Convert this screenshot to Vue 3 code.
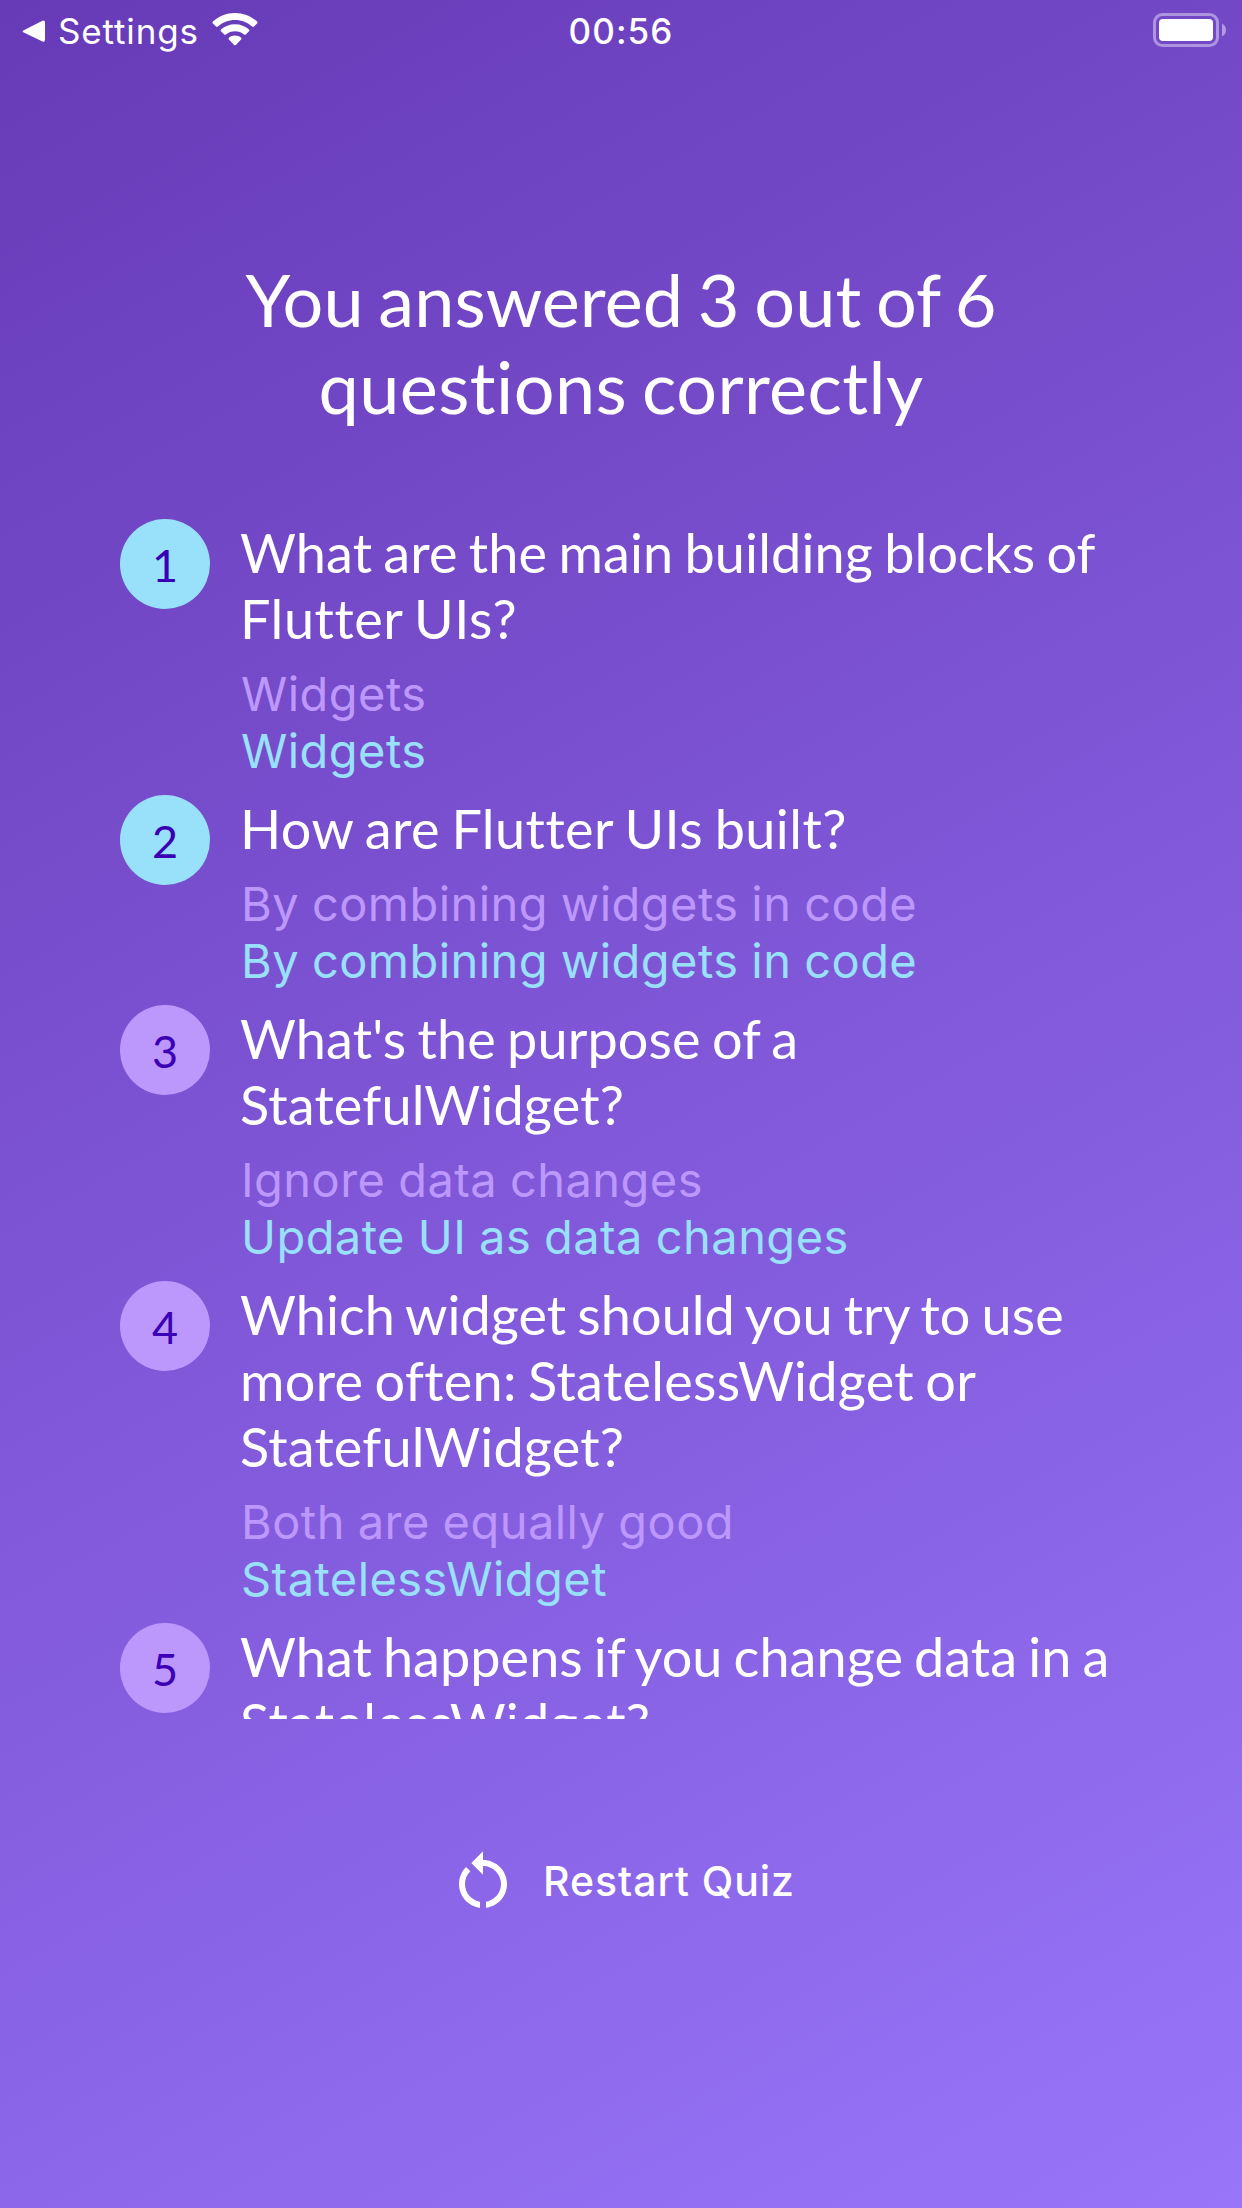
<script setup>
// ls: letter spacing of each question line, in px
const items = [
  {
    ok: true,
    lines: [{ text: 'What are the main building blocks of', ls: 0.14 }, { text: 'Flutter UIs?', ls: 0.55 }],
    given: 'Widgets',
    right: 'Widgets',
  },
  {
    ok: true,
    lines: [{ text: 'How are Flutter UIs built?', ls: 0.44 }],
    given: 'By combining widgets in code',
    right: 'By combining widgets in code',
  },
  {
    ok: false,
    lines: [{ text: "What's the purpose of a", ls: 0.13 }, { text: 'StatefulWidget?', ls: 0.18 }],
    given: 'Ignore data changes',
    right: 'Update UI as data changes',
  },
  {
    ok: false,
    lines: [
      { text: 'Which widget should you try to use', ls: 0.06 },
      { text: 'more often: StatelessWidget or', ls: 0.3 },
      { text: 'StatefulWidget?', ls: 0.18 },
    ],
    given: 'Both are equally good',
    right: 'StatelessWidget',
  },
  {
    ok: false,
    lines: [{ text: 'What happens if you change data in a', ls: 0.05 }, { text: 'StatelessWidget?', ls: 0.3 }],
  },
]
</script>

<template>
  <div class="screen">
    <header class="status">
      <div class="back">
        <svg class="tri" width="24" height="24" viewBox="0 0 24 24" fill="#fff">
          <path d="M1.800 10.200 20.500 .8Q23 0 23 2.500V19.500Q23 22.500 20.500 21.500L1.800 12.600Q-.5 11.400 1.800 10.200Z" />
        </svg>
        <span class="settings">Settings</span>
        <svg class="wifi" width="46" height="34" viewBox="0 0 46 34" fill="#fff">
          <path d="M23 0C14.500 0 6.700 3.200.9 8.600Q0 9.500.9 10.400L4 13.600Q4.900 14.400 5.800 13.600C10.300 9.500 16.300 7 23 7S35.700 9.500 40.200 13.600Q41.100 14.400 42 13.600L45.100 10.400Q46 9.500 45.100 8.600C39.300 3.200 31.500 0 23 0Z" />
          <path d="M23 11.200C17.600 11.200 12.700 13.200 9 16.500Q8.100 17.400 9 18.300L12.200 21.500Q13 22.200 13.900 21.500C16.300 19.400 19.500 18.200 23 18.200S29.700 19.400 32.100 21.500Q33 22.200 33.800 21.500L37 18.300Q37.900 17.400 37 16.500C33.300 13.200 28.400 11.200 23 11.200Z" />
          <path d="M23 22.500C20.700 22.500 18.500 23.400 16.900 24.800Q16 25.700 16.900 26.600L22.100 31.900Q23 32.800 23.900 31.900L29.100 26.600Q30 25.700 29.100 24.800C27.500 23.400 25.300 22.500 23 22.500Z" />
        </svg>
      </div>
      <time class="clock">00:56</time>
      <svg class="battery" width="74" height="35" viewBox="0 0 74 35">
        <rect x="1.500" y="1.500" width="63" height="31" rx="8" fill="none" stroke="#fff" stroke-opacity=".42" stroke-width="3" />
        <rect x="6" y="6" width="54" height="22" rx="4" fill="#fff" />
        <path d="M69 10.500Q73 12.500 73 17T69 23.500Z" fill="#fff" fill-opacity=".45" />
      </svg>
    </header>

    <main class="results">
      <h1 class="title">
        <span class="line">You answered 3 out of 6</span>
        <span class="line second">questions correctly</span>
      </h1>
      <div class="list">
        <article v-for="(item, i) in items" :key="i" class="item">
          <div class="badge" :class="{ ok: item.ok }">{{ i + 1 }}</div>
          <div class="body">
            <h2 class="question">
              <span v-for="l in item.lines" :key="l.text" class="line" :style="{ letterSpacing: l.ls + 'px' }">{{ l.text }}</span>
            </h2>
            <template v-if="item.given">
              <p class="answer given">{{ item.given }}</p>
              <p class="answer right">{{ item.right }}</p>
            </template>
          </div>
        </article>
      </div>
      <button class="restart">
        <svg width="72" height="72" viewBox="0 0 24 24" fill="#fff">
          <path d="M6 13c0-1.650.67-3.150 1.760-4.240L6.340 7.340C4.900 8.790 4 10.790 4 13c0 4.080 3.050 7.440 7 7.930v-2.020C8.170 18.430 6 15.970 6 13z" />
          <path d="M20 13c0-4.420-3.580-8-8-8V2.100L8.100 6 12 9.900V7c3.310 0 6 2.690 6 6 0 2.970-2.170 5.430-5 5.910v2.020c3.950-.49 7-3.850 7-7.930z" />
        </svg>
        <span>Restart Quiz</span>
      </button>
    </main>
  </div>
</template>

<style>
body { margin: 0; }
</style>

<style scoped>
.screen {
  width: 1242px;
  height: 2208px;
  overflow: hidden;
  color: #fff;
  background: linear-gradient(150.64deg, #673ab7, #9875f9);
}
.status {
  height: 60px;
  display: grid;
  grid-template-columns: 1fr auto 1fr;
  font: 400 35px/62px Inter, sans-serif;
}
.back { display: flex; align-items: flex-start; padding-left: 22px; }
.tri { margin-top: 20px; }
.settings { margin-left: 12px; letter-spacing: 0.85px; }
.wifi { margin: 13px 0 0 13px; }
.clock { font-weight: 550; letter-spacing: 1.1px; }
.battery { justify-self: end; margin: 13px 15px 0 0; }
.results { display: flex; flex-direction: column; padding: 196px 120px 0; }
.line { display: block; }
.title {
  margin: 0 0 89px;
  font: 400 72px/87px Lato, sans-serif;
  font-variant-ligatures: none;
  letter-spacing: 0.06px;
  word-spacing: -3.8px;
  text-align: center;
  white-space: nowrap;
}
.second { letter-spacing: 0.39px; }
.list {
  height: 1200px;
  overflow: hidden;
  display: flex;
  flex-direction: column;
  gap: 15px;
}
.item { display: flex; gap: 30px; flex: none; }
.badge {
  flex: none;
  width: 90px;
  height: 90px;
  border-radius: 50%;
  background: #bc98fc;
  color: #3b00b5;
  font: 400 45px/92px Lato, sans-serif;
  text-align: center;
}
.badge.ok { background: #99e0fb; }
.body { padding: 1px 0; }
.question {
  margin: 0 0 13px;
  font: 400 54px/66px Lato, sans-serif;
  font-variant-ligatures: none;
  word-spacing: -2.8px;
  white-space: nowrap;
}
.answer {
  margin: 0;
  padding-left: 1px;
  font: 400 47px/57px Inter, sans-serif;
  letter-spacing: 0.44px;
  word-spacing: -0.8px;
  white-space: nowrap;
}
.given { color: #bc98fc; }
.right { color: #99e0fb; }
.restart {
  display: flex;
  align-items: center;
  align-self: center;
  gap: 24px;
  margin: 126px 0 0;
  padding: 0;
  border: 0;
  background: none;
  color: #fff;
  font: 500 41px/72px Inter, sans-serif;
  letter-spacing: 0.95px;
}
</style>
